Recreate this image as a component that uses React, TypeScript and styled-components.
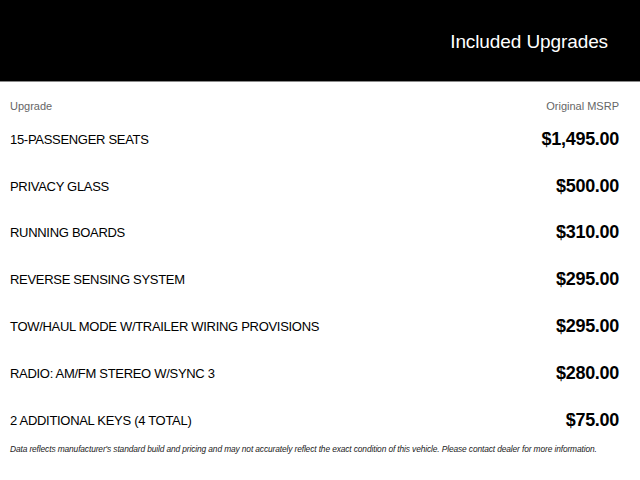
import React from "react";
import styled, { createGlobalStyle } from "styled-components";

const Global = createGlobalStyle`
  html, body { margin: 0; padding: 0; background: #fff; }
  body { font-family: "Liberation Sans", Arial, sans-serif; color: #000; }
`;

const Page = styled.div`
  width: 640px;
  height: 480px;
  overflow: hidden;
  display: flex;
  flex-direction: column;
`;

const Header = styled.header`
  height: 82px;
  background: #000;
  border-bottom: 1px solid #8a8a8a;
  display: flex;
  align-items: flex-start;
  justify-content: flex-end;
  padding: 31px 32px 0 0;
  box-sizing: border-box;
`;

const Title = styled.h1`
  margin: 0;
  color: #fff;
  font-size: 19px;
  font-weight: 400;
  line-height: 22px;
  letter-spacing: -0.1px;
`;

const Body = styled.div`
  display: flex;
  flex-direction: column;
  padding: 14px 21px 0 10px;
`;

const LabelRow = styled.div`
  display: flex;
  justify-content: space-between;
  align-items: center;
  height: 20px;
  font-size: 11px;
  color: #666;
`;

const Row = styled.div`
  display: flex;
  justify-content: space-between;
  align-items: center;
  height: 46.8px;
`;

const Name = styled.span`
  font-size: 13px;
  letter-spacing: -0.3px;
`;

const Price = styled.span`
  font-size: 18px;
  font-weight: 700;
  letter-spacing: -0.3px;
`;

const Footer = styled.p`
  margin: 0;
  font-size: 8.4px;
  line-height: 10px;
  font-style: italic;
  color: #222;
  white-space: nowrap;
  letter-spacing: -0.12px;
`;

const items: [string, string][] = [
  ["15-PASSENGER SEATS", "$1,495.00"],
  ["PRIVACY GLASS", "$500.00"],
  ["RUNNING BOARDS", "$310.00"],
  ["REVERSE SENSING SYSTEM", "$295.00"],
  ["TOW/HAUL MODE W/TRAILER WIRING PROVISIONS", "$295.00"],
  ["RADIO: AM/FM STEREO W/SYNC 3", "$280.00"],
  ["2 ADDITIONAL KEYS (4 TOTAL)", "$75.00"],
];

export default function App() {
  return (
    <>
      <Global />
      <Page>
        <Header>
          <Title>Included Upgrades</Title>
        </Header>
        <Body>
          <LabelRow>
            <span>Upgrade</span>
            <span>Original MSRP</span>
          </LabelRow>
          {items.map(([n, p], i) => (
            <Row key={i}>
              <Name>{n}</Name>
              <Price>{p}</Price>
            </Row>
          ))}
          <Footer>
            Data reflects manufacturer's standard build and pricing and may not accurately reflect the exact condition of this vehicle. Please contact dealer for more information.
          </Footer>
        </Body>
      </Page>
    </>
  );
}
